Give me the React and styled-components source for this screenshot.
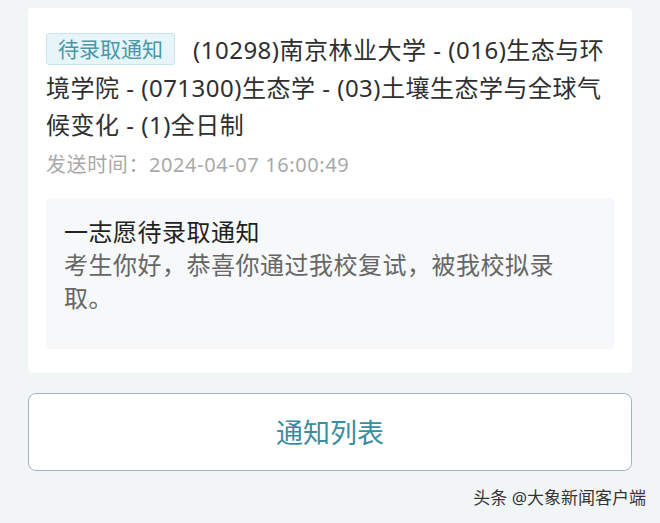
import React from 'react';
import styled, { createGlobalStyle } from 'styled-components';

const GlobalStyle = createGlobalStyle`
    html, body {
        margin: 0;
        padding: 0;
        background-color: #f1f5f6;
        font-family: "Noto Sans", "Noto Sans CJK SC", sans-serif;
    }
`;

const Page = styled.div`
    width: 660px;
    height: 523px;
    padding: 8px 28px 0 28px;
    box-sizing: border-box;
    display: flex;
    flex-direction: column;
`;

const Card = styled.div`
    background-color: #fff;
    border-radius: 4px;
    padding: 23px 18px 24px 18px;
    display: flex;
    flex-direction: column;
`;

const Title = styled.div`
    font-size: 24px;
    letter-spacing: 0.5px;
    line-height: 37.5px;
    color: #2f2f2f;
    white-space: nowrap;
`;

const Tag = styled.span`
    display: inline-block;
    vertical-align: top;
    margin-top: 2px;
    margin-right: 18px;
    height: 32px;
    padding: 0 11px;
    line-height: 31px;
    font-size: 21px;
    letter-spacing: 0;
    color: #4b97a9;
    background-color: #e5f5f8;
    border: 1px solid #c8e5eb;
    border-radius: 3px;
    box-sizing: border-box;
`;

const SendTime = styled.div`
    margin-top: 7px;
    font-size: 20px;
    letter-spacing: 0.6px;
    line-height: 28px;
    color: #a9a9a9;
`;

const MessageBox = styled.div`
    margin-top: 19px;
    background-color: #f6f8f9;
    border-radius: 3px;
    padding: 17px 18px 35px 18px;
`;

const MessageTitle = styled.div`
    font-size: 24px;
    letter-spacing: 0.5px;
    line-height: 33px;
    color: #222;
`;

const MessageBody = styled.div`
    font-size: 24px;
    letter-spacing: 0.5px;
    line-height: 33px;
    color: #666;
    white-space: nowrap;
`;

const ListButton = styled.button`
    margin-top: 20px;
    height: 78px;
    width: 100%;
    background-color: #fff;
    border: 1.5px solid #9bb7bd;
    border-radius: 8px;
    font-family: "Noto Sans CJK SC", sans-serif;
    font-size: 27px;
    color: #3b8da2;
    cursor: pointer;
`;

const Footer = styled.div`
    margin-top: 13px;
    margin-right: -14px;
    text-align: right;
    font-size: 17px;
    color: #333;
    text-shadow: 0 0 2px #fff;
`;

const App = () => {
    return (
        <>
            <GlobalStyle />
            <Page>
                <Card>
                    <Title>
                        <Tag>待录取通知</Tag>
                        (10298)南京林业大学 - (016)生态与环<br />
                        境学院 - (071300)生态学 - (03)土壤生态学与全球气<br />
                        候变化 - (1)全日制
                    </Title>
                    <SendTime>发送时间：2024-04-07 16:00:49</SendTime>
                    <MessageBox>
                        <MessageTitle>一志愿待录取通知</MessageTitle>
                        <MessageBody>
                            考生你好，恭喜你通过我校复试，被我校拟录<br />
                            取。
                        </MessageBody>
                    </MessageBox>
                </Card>
                <ListButton>通知列表</ListButton>
                <Footer>头条 @大象新闻客户端</Footer>
            </Page>
        </>
    );
};

export default App;
